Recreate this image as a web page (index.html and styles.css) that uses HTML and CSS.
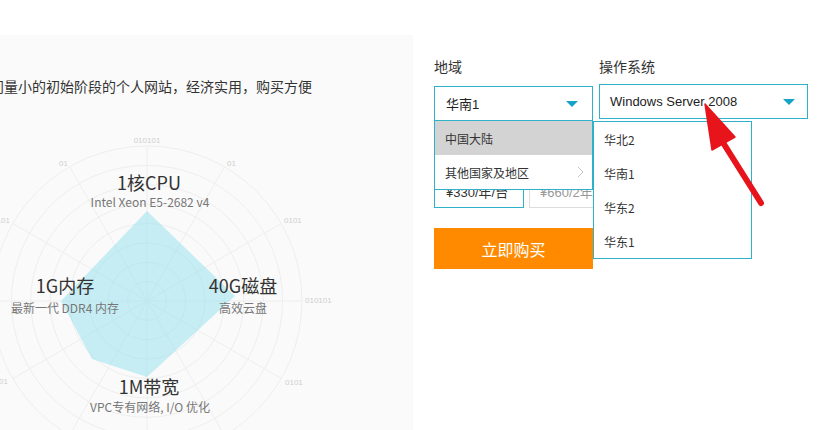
FILE: index.html
```html
<!DOCTYPE html>
<html lang="zh-CN">
<head>
<meta charset="utf-8">
<title>购买云服务器</title>
<link rel="stylesheet" href="styles.css">
</head>
<body>
<div class="page">
  <section class="intro">
    <p class="desc">访问量小的初始阶段的个人网站，经济实用，购买方便</p>
    <svg class="radar" width="413" height="310" viewBox="0 120 413 310" xmlns="http://www.w3.org/2000/svg">
      <g class="grid" fill="none" stroke="#eeeeee" stroke-width="1">
        <circle cx="147" cy="301" r="19.4"/>
        <circle cx="147" cy="301" r="38.8"/>
        <circle cx="147" cy="301" r="58.1"/>
        <circle cx="147" cy="301" r="77.5"/>
        <circle cx="147" cy="301" r="96.9"/>
        <circle cx="147" cy="301" r="116.3"/>
        <circle cx="147" cy="301" r="135.6"/>
        <circle cx="147" cy="301" r="155"/>
        <line x1="147" y1="301" x2="147" y2="146"/>
        <line x1="147" y1="301" x2="224.5" y2="166.8"/>
        <line x1="147" y1="301" x2="281.2" y2="223.5"/>
        <line x1="147" y1="301" x2="302" y2="301"/>
        <line x1="147" y1="301" x2="281.2" y2="378.5"/>
        <line x1="147" y1="301" x2="224.5" y2="435.2"/>
        <line x1="147" y1="301" x2="147" y2="456"/>
        <line x1="147" y1="301" x2="69.5" y2="435.2"/>
        <line x1="147" y1="301" x2="12.8" y2="378.5"/>
        <line x1="147" y1="301" x2="-8" y2="301"/>
        <line x1="147" y1="301" x2="12.8" y2="223.5"/>
        <line x1="147" y1="301" x2="69.5" y2="166.8"/>
      </g>
      <polygon class="area" points="147,211 235,296 147,377 92,359 61,301"/>
      <g class="ticks">
        <text x="147" y="143" text-anchor="middle">010101</text>
        <text x="227" y="166">01</text>
        <text x="68" y="166" text-anchor="end">01</text>
        <text x="284" y="223">0101</text>
        <text x="10" y="223" text-anchor="end">0101</text>
        <text x="305" y="303">010101</text>
        <text x="285" y="385">0101</text>
        <text x="8" y="384" text-anchor="end">0101</text>
      </g>
      <g class="specs" text-anchor="middle">
        <text class="spec-title" x="149" y="190">1核CPU</text>
        <text class="spec-sub" x="150" y="207">Intel Xeon E5-2682 v4</text>
        <text class="spec-title" x="65" y="293">1G内存</text>
        <text class="spec-sub" x="65" y="313">最新一代 DDR4 内存</text>
        <text class="spec-title" x="243" y="293">40G磁盘</text>
        <text class="spec-sub" x="243" y="313">高效云盘</text>
        <text class="spec-title" x="149" y="394">1M带宽</text>
        <text class="spec-sub" x="150" y="412">VPC专有网络, I/O 优化</text>
      </g>
    </svg>
  </section>

  <section class="buy">
    <div class="fields">
      <div class="field field--region">
        <div class="label">地域</div>
        <div class="select-wrap select-wrap--region">
          <div class="select">
            <span>华南1</span>
            <i class="caret"></i>
          </div>
          <ul class="menu menu--region">
            <li class="menu-item is-active">中国大陆</li>
            <li class="menu-item has-sub">其他国家及地区
              <svg class="chevron" width="7" height="12" viewBox="0 0 7 12"><polyline points="1,1 6,6 1,11" fill="none" stroke="#c4c4c4" stroke-width="1"/></svg>
            </li>
          </ul>
        </div>
      </div>
      <div class="field field--os">
        <div class="label">操作系统</div>
        <div class="select-wrap select-wrap--os">
          <div class="select select--os">
            <span>Windows Server 2008</span>
            <i class="caret"></i>
          </div>
          <ul class="menu menu--os">
            <li class="menu-item">华北2</li>
            <li class="menu-item">华南1</li>
            <li class="menu-item">华东2</li>
            <li class="menu-item">华东1</li>
          </ul>
        </div>
      </div>
    </div>
    <div class="prices">
      <div class="price price--active">¥330/年/台</div>
      <div class="price">¥660/2年/台</div>
    </div>
    <button class="buy-btn">立即购买</button>
  </section>
</div>
<svg class="annotation" width="818" height="430" viewBox="0 0 818 430" xmlns="http://www.w3.org/2000/svg">
  <line x1="761" y1="203" x2="722" y2="141" stroke="#e8141c" stroke-width="6" stroke-linecap="round"/>
  <polygon points="705,104 712,150 735,137" fill="#e8141c" stroke="#e8141c" stroke-width="1.5" stroke-linejoin="round"/>
</svg>
</body>
</html>
```

FILE: styles.css
```css
* {
  box-sizing: border-box;
}

html, body {
  margin: 0;
  padding: 0;
}

body {
  width: 818px;
  height: 430px;
  overflow: hidden;
  background: #ffffff;
  position: relative;
  font-family: "Noto Sans CJK SC", "Noto Sans", sans-serif;
  color: #333333;
}

.page {
  display: flex;
  align-items: flex-start;
}

/* left intro panel */
.intro {
  flex: 0 0 413px;
  width: 413px;
  height: 395px;
  margin-top: 35px;
  background: #fafafa;
  overflow: hidden;
}

.desc {
  margin: 41px 0 0 -24px;
  font-size: 14px;
  line-height: 20px;
  color: #333333;
  white-space: nowrap;
}

.radar {
  display: block;
  margin-top: 24px;
}

.area {
  fill: rgba(150, 224, 238, 0.52);
}

.ticks text {
  font-family: "Liberation Sans", sans-serif;
  font-size: 8px;
  fill: #cfcfcf;
}

.spec-title {
  font-family: "Noto Sans CJK SC", sans-serif;
  font-size: 18px;
  fill: #333333;
}

.spec-sub {
  font-family: "Noto Sans CJK SC", sans-serif;
  font-size: 12px;
  fill: #777777;
}

/* right buy form */
.buy {
  margin-left: 21px;
  padding-top: 56px;
  width: 374px;
  font-family: "Liberation Sans", "Noto Sans CJK SC", sans-serif;
}

.fields {
  display: flex;
  gap: 6px;
  align-items: flex-start;
}

.field--region {
  width: 159px;
}

.field--os {
  width: 209px;
}

.label {
  font-family: "Noto Sans CJK SC", sans-serif;
  font-size: 14px;
  line-height: 20px;
  color: #333333;
}

.select-wrap {
  position: relative;
  margin-top: 10px;
}

.select-wrap--os {
  margin-top: 8px;
}

.select {
  height: 35px;
  border: 1px solid #2fb2c9;
  background: #ffffff;
  display: flex;
  align-items: center;
  justify-content: space-between;
  padding: 0 14px 0 11px;
  font-size: 13px;
  color: #222222;
}

.select--os {
  padding: 0 12px 0 10px;
}

.caret {
  width: 0;
  height: 0;
  border-left: 6px solid transparent;
  border-right: 6px solid transparent;
  border-top: 6px solid #17a3c8;
}

.menu {
  list-style: none;
  margin: 0;
  padding: 0;
  position: absolute;
  left: 0;
  background: #ffffff;
  border: 1px solid #2fb2c9;
  z-index: 5;
}

.menu--region {
  top: 100%;
  width: 159px;
  border-top: none;
}

.menu--os {
  top: calc(100% + 2px);
  left: -6px;
  width: 159px;
}

.menu-item {
  height: 34px;
  display: flex;
  align-items: center;
  justify-content: space-between;
  padding: 0 10px;
  font-family: "Noto Sans CJK SC", sans-serif;
  font-size: 12px;
  color: #333333;
}

.menu-item.is-active {
  background: #d3d3d3;
}

.menu--region .menu-item {
  padding-right: 8px;
}

.chevron {
  display: block;
}

.prices {
  display: flex;
  gap: 5px;
  margin-top: 53px;
}

.price {
  height: 34px;
  width: 110px;
  border: 1px solid #dddddd;
  display: flex;
  align-items: center;
  padding-left: 10px;
  font-size: 13px;
  color: #999999;
  white-space: nowrap;
}

.price--active {
  width: 90px;
  border-color: #2fb2c9;
  padding-left: 11px;
  color: #333333;
}

.buy-btn {
  display: block;
  margin-top: 20px;
  width: 159px;
  height: 41px;
  border: none;
  background: #ff8a00;
  color: #ffffff;
  font-family: "Noto Sans CJK SC", sans-serif;
  font-size: 16px;
  padding: 0;
}

.annotation {
  position: absolute;
  left: 0;
  top: 0;
  pointer-events: none;
  z-index: 10;
}
```
